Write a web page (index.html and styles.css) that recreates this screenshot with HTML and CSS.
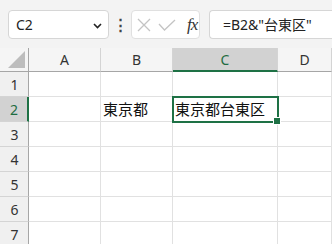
FILE: index.html
```html
<!DOCTYPE html>
<html lang="ja">
<head>
    <meta charset="UTF-8">
    <title>Excel - 文字列の連結</title>
    <link rel="stylesheet" href="styles.css">
</head>
<body>

    <!-- Formula bar -->
    <div class="formula-bar">
        <div class="name-box">
            <span>C2</span>
            <svg class="chevron" width="9" height="6" viewBox="0 0 9 6">
                <path d="M1 1 L4.5 4.5 L8 1" fill="none" stroke="#222" stroke-width="1.6"/>
            </svg>
        </div>
        <div class="grip">&#8942;</div>
        <div class="func-box">
            <svg width="14" height="14" viewBox="0 0 14 14">
                <path d="M1 1 L13 13 M13 1 L1 13" stroke="#c4c4c4" stroke-width="1.3"/>
            </svg>
            <svg width="18" height="12" viewBox="0 0 18 12">
                <path d="M1 5 L6.5 11 L17 1" fill="none" stroke="#c4c4c4" stroke-width="1.3"/>
            </svg>
            <span class="fx">fx</span>
        </div>
        <div class="formula-input">=B2&amp;"台東区"</div>
    </div>

    <!-- Sheet grid -->
    <div class="sheet">
        <div class="hd corner"><span class="tri"></span></div>
        <div class="hd col">A</div>
        <div class="hd col">B</div>
        <div class="hd col active-col">C</div>
        <div class="hd col">D</div>

        <div class="hd row">1</div>
        <div class="cell"></div><div class="cell"></div><div class="cell"></div><div class="cell"></div>

        <div class="hd row active-row">2</div>
        <div class="cell"></div>
        <div class="cell">東京都</div>
        <div class="cell selected">東京都台東区<span class="handle"></span></div>
        <div class="cell"></div>

        <div class="hd row">3</div>
        <div class="cell"></div><div class="cell"></div><div class="cell"></div><div class="cell"></div>
        <div class="hd row">4</div>
        <div class="cell"></div><div class="cell"></div><div class="cell"></div><div class="cell"></div>
        <div class="hd row">5</div>
        <div class="cell"></div><div class="cell"></div><div class="cell"></div><div class="cell"></div>
        <div class="hd row">6</div>
        <div class="cell"></div><div class="cell"></div><div class="cell"></div><div class="cell"></div>
        <div class="hd row">7</div>
        <div class="cell"></div><div class="cell"></div><div class="cell"></div><div class="cell"></div>
    </div>

</body>
</html>
```

FILE: styles.css
```css
/* --- Excel style sheet snippet --- */

html, body {
    margin: 0;
    padding: 0;
    height: 100%;
    overflow: hidden;
    background-color: white;
    font-family: "Noto Sans", "Noto Sans CJK JP", sans-serif;
    color: #222;
}

/* formula bar */
.formula-bar {
    height: 48px;
    background-color: #f3f3f3;
    display: flex;
    align-items: flex-start;
    padding: 10px 0 0 8px;
    box-sizing: border-box;
}

.name-box {
    width: 101px;
    height: 29px;
    background: white;
    border: 1px solid #d6d6d6;
    border-radius: 4px;
    box-sizing: border-box;
    display: flex;
    align-items: center;
    justify-content: space-between;
    padding: 0 6px 0 7px;
    font-size: 14px;
}

.name-box .chevron {
    margin-top: 2px;
}

.grip {
    width: 22px;
    text-align: center;
    font-size: 15px;
    font-weight: bold;
    line-height: 29px;
    color: #444;
}

.func-box {
    width: 69px;
    height: 29px;
    background: white;
    border: 1px solid #e0e0e0;
    border-radius: 4px;
    box-sizing: border-box;
    display: flex;
    align-items: center;
    padding: 0 0 0 5px;
    gap: 7px;
}

.fx {
    font-family: "Liberation Serif", serif;
    font-style: italic;
    font-size: 17px;
    color: #333;
    margin-left: 4px;
    letter-spacing: -1px;
}

.formula-input {
    flex-grow: 1;
    margin-left: 9px;
    height: 29px;
    background: white;
    border: 1px solid #d6d6d6;
    border-right: none;
    border-radius: 4px 0 0 4px;
    box-sizing: border-box;
    padding-left: 13px;
    font-size: 14px;
    line-height: 27px;
    white-space: nowrap;
}

/* grid */
.sheet {
    display: grid;
    grid-template-columns: 29px 72px 72px 105px 1fr;
    grid-template-rows: 24px repeat(7, 25px);
}

.hd {
    background-color: #f0f0f0;
    font-size: 14px;
    color: #333;
    display: flex;
    align-items: center;
    justify-content: center;
    box-sizing: border-box;
    border-right: 1px solid #d4d4d4;
    border-bottom: 1px solid #d4d4d4;
}

.hd.col {
    border-bottom: 1px solid #a6a6a6;
    background-color: #f5f5f5;
}

.hd.row {
    border-right: 1px solid #a6a6a6;
    border-bottom: 1px solid #d4d4d4;
    padding-left: 1px;
}

.corner {
    position: relative;
    border-right: 1px solid #a6a6a6;
    border-bottom: 1px solid #a6a6a6;
    background-color: #f5f5f5;
}

.corner .tri {
    position: absolute;
    right: 3px;
    bottom: 3px;
    width: 0;
    height: 0;
    border-left: 17px solid transparent;
    border-bottom: 17px solid #bdbdbd;
}

.active-col {
    background-color: #d2d2d2 !important;
    color: #1e6c41;
    border-bottom: 2px solid #1e7145 !important;
}

.active-row {
    background-color: #d2d2d2;
    color: #1e6c41;
    border-right: 2px solid #1e7145 !important;
}

.cell {
    box-sizing: border-box;
    border-right: 1px solid #e1e1e1;
    border-bottom: 1px solid #e1e1e1;
    font-family: "Noto Sans CJK JP", sans-serif;
    font-size: 15px;
    line-height: 24px;
    padding-left: 2px;
    white-space: nowrap;
    color: #111;
}

.cell.selected {
    position: relative;
    outline: 2px solid #1e7145;
    outline-offset: -1px;
    z-index: 2;
}

.cell .handle {
    position: absolute;
    right: -4px;
    bottom: -4px;
    width: 6px;
    height: 6px;
    background-color: #1e7145;
    border: 1px solid white;
}
```
